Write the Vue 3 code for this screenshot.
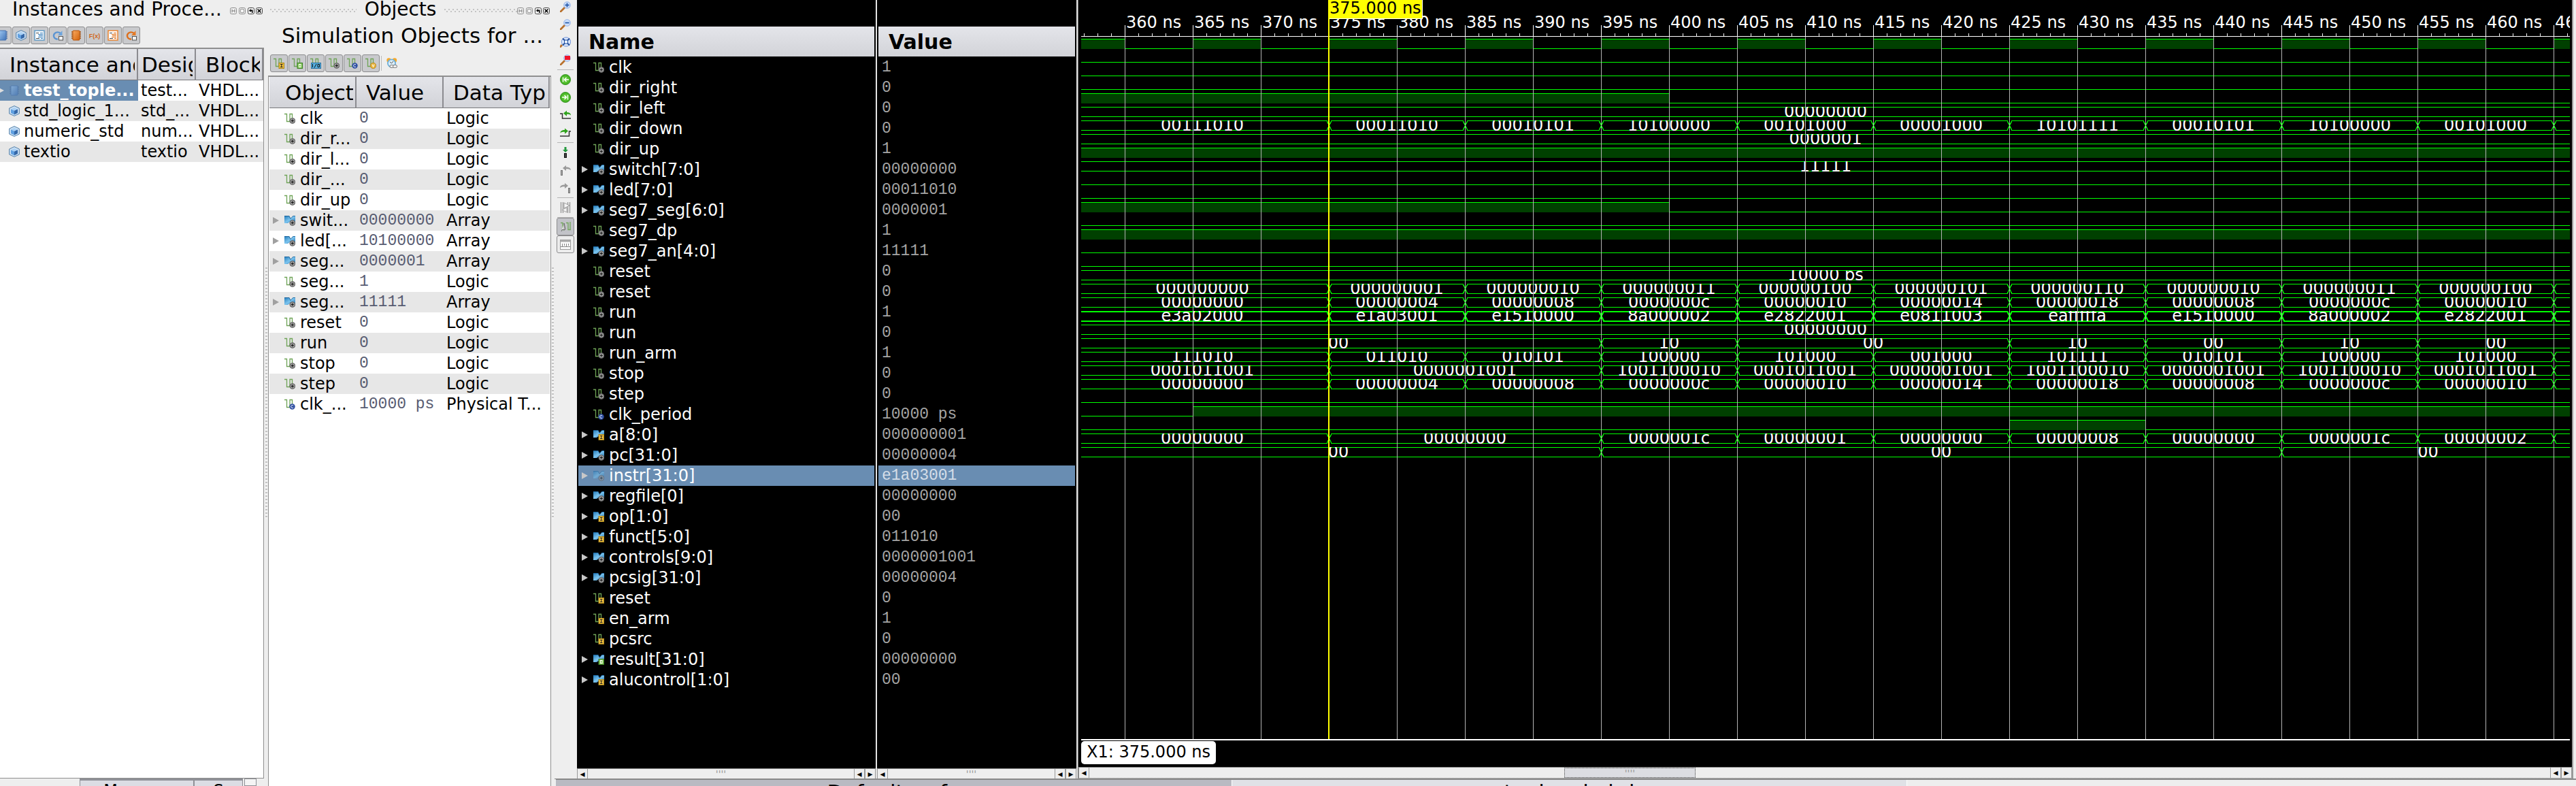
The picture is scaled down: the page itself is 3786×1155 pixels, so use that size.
<script setup>
const instances = [
  { name: 'test_tople...', unit: 'test...', block: 'VHDL...', icon: 'i-chip', selected: true },
  { name: 'std_logic_1...', unit: 'std_...', block: 'VHDL...', icon: 'i-cube' },
  { name: 'numeric_std', unit: 'num...', block: 'VHDL...', icon: 'i-cube' },
  { name: 'textio', unit: 'textio', block: 'VHDL...', icon: 'i-cube' },
]

const objects = [
  ['clk', '0', 'Logic'],
  ['dir_r...', '0', 'Logic'],
  ['dir_l...', '0', 'Logic'],
  ['dir_...', '0', 'Logic'],
  ['dir_up', '0', 'Logic'],
  ['swit...', '00000000', 'Array'],
  ['led[...', '10100000', 'Array'],
  ['seg...', '0000001', 'Array'],
  ['seg...', '1', 'Logic'],
  ['seg...', '11111', 'Array'],
  ['reset', '0', 'Logic'],
  ['run', '0', 'Logic'],
  ['stop', '0', 'Logic'],
  ['step', '0', 'Logic'],
  ['clk_...', '10000 ps', 'Physical T...'],
].map(([name, value, type]) => ({
  name, value, type,
  bus: type === 'Array',
  badge: type.startsWith('Physical') ? 'b-c' : 'b-plus',
}))

const instanceTools = ['i-chip', 'i-cube', 'i-list', 'i-proc', 'i-chip-o', 'i-fx', 'i-list-o', 'i-proc-o']
const objectTools = ['b-i', 'b-o', 'b-io', 'b-plus', 'b-c', 'b-v']
const waveTools = [
  ['t-zoomin', 't-zoomout', 't-zoomfit', 't-zoomsel'],
  ['t-first', 't-last', 't-prev', 't-next'],
  ['t-marker', 't-mprev', 't-mnext'],
  ['t-swap'],
]

// Segment lists for the buses that share the ten-nanosecond fetch rhythm
const T = [375, 385, 395, 405, 415, 425, 435, 445, 455]
const every = (s) => ({ edges: [...T, 465], labels: s.split(' ') })
const pcs = '00000000 00000004 00000008 0000000c 00000010 00000014 00000018 00000008 0000000c 00000010'

const signals = [
  { n: 'clk', v: '1', clock: true },
  { n: 'dir_right', v: '0', low: true },
  { n: 'dir_left', v: '0', low: true },
  { n: 'dir_down', v: '0', low: true },
  { n: 'dir_up', v: '1', high: [[null, 400]] },
  { n: 'switch[7:0]', v: '00000000', all: '00000000' },
  { n: 'led[7:0]', v: '00011010', seg: every('00111010 00011010 00010101 10100000 00101000 00001000 10101111 00010101 10100000 00101000') },
  { n: 'seg7_seg[6:0]', v: '0000001', all: '0000001' },
  { n: 'seg7_dp', v: '1', high: [[null, null]] },
  { n: 'seg7_an[4:0]', v: '11111', all: '11111' },
  { n: 'reset', v: '0', low: true },
  { n: 'reset', v: '0', low: true },
  { n: 'run', v: '1', high: [[null, 400]] },
  { n: 'run', v: '0', low: true },
  { n: 'run_arm', v: '1', high: [[null, null]] },
  { n: 'stop', v: '0', low: true },
  { n: 'step', v: '0', low: true },
  { n: 'clk_period', v: '10000 ps', all: '10000 ps', scalar: true, b: 'b-c' },
  { n: 'a[8:0]', v: '000000001', b: 'b-i', seg: every('000000000 000000001 000000010 000000011 000000100 000000101 000000110 000000010 000000011 000000100') },
  { n: 'pc[31:0]', v: '00000004', seg: every(pcs) },
  { n: 'instr[31:0]', v: 'e1a03001', selected: true, seg: every('e3a02000 e1a03001 e1510000 8a000002 e2822001 e0811003 eafffffa e1510000 8a000002 e2822001') },
  { n: 'regfile[0]', v: '00000000', all: '00000000' },
  { n: 'op[1:0]', v: '00', b: 'b-i', seg: { edges: [395, 405, 425, 435, 445, 455], labels: ['00', '10', '00', '10', '00', '10', '00'] } },
  { n: 'funct[5:0]', v: '011010', b: 'b-i', seg: every('111010 011010 010101 100000 101000 001000 101111 010101 100000 101000') },
  { n: 'controls[9:0]', v: '0000001001', seg: { edges: [375, 395, 405, 415, 425, 435, 445, 455, 465], labels: ['0001011001', '0000001001', '1001100010', '0001011001', '0000001001', '1001100010', '0000001001', '1001100010', '0001011001'] } },
  { n: 'pcsig[31:0]', v: '00000004', seg: every(pcs) },
  { n: 'reset', v: '0', b: 'b-i', low: true },
  { n: 'en_arm', v: '1', b: 'b-i', high: [[365, null]] },
  { n: 'pcsrc', v: '0', b: 'b-i', high: [[425, 435]] },
  { n: 'result[31:0]', v: '00000000', b: 'b-o', seg: { edges: [375, 395, 405, 415, 425, 435, 445, 455, 465], labels: ['00000000', '00000000', '0000001c', '00000001', '00000000', '00000008', '00000000', '0000001c', '00000002'] } },
  { n: 'alucontrol[1:0]', v: '00', b: 'b-i', seg: { edges: [395, 445], labels: ['00', '00', '00'] } },
]

// Time axis: twenty pixels per nanosecond, 360 ns at 64 px
const START = -8
const END = 2195
const px = (ns) => 64 + (ns - 360) * 20
const HI = 0.5
const LO = 14.5

function digital(s) {
  const high = s.clock
    ? Array.from({ length: 12 }, (_, i) => [355 + i * 10, 360 + i * 10])
    : (s.high || [])
  const spans = high.map(([a, b]) => [a === null ? START : px(a), b === null ? END : px(b)])
  let d = `M${START} ${spans.length && spans[0][0] <= START ? HI : LO}`
  for (const [a, b] of spans) {
    if (a > START) d += `H${a}`
    d += `V${HI}H${b}`
    if (b < END) d += `V${LO}`
  }
  d += `H${END}`
  return { spans, d }
}

function bus(s) {
  const edges = (s.seg ? s.seg.edges : []).map(px)
  let up = `M${START} ${HI}`
  let down = `M${START} ${LO}`
  let a = HI
  let b = LO
  for (const x of edges) {
    up += `H${x - 3}L${x + 4} ${b}`
    down += `H${x - 3}L${x + 4} ${a}`
    ;[a, b] = [b, a]
  }
  up += `H${END}`
  down += `H${END}`
  const stops = [START, ...edges, END]
  const texts = s.seg
    ? s.seg.labels.map((t, i) => ({ t, x: (stops[i] + stops[i + 1]) / 2 }))
    : [{ t: s.all, x: '50%' }]
  return { d: up + down, texts }
}

const waves = signals.map((s, i) => {
  const isBus = Boolean(s.all || s.seg)
  return { y: 57 + i * 20, isBus, thick: s.selected, ...(isBus ? bus(s) : digital(s)) }
})

const majors = Array.from({ length: 22 }, (_, i) => 360 + i * 5)
const minors = Array.from({ length: 110 }, (_, i) => 357 + i).filter((t) => t % 5)
const isBusSignal = (s) => Boolean((s.all || s.seg) && !s.scalar)
</script>

<template>
  <svg class="defs" aria-hidden="true">
    <defs>
      <linearGradient id="gBlue" x1="0" y1="0" x2="1" y2="1"><stop offset="0" stop-color="#9cc6f0" /><stop offset="1" stop-color="#3f72b8" /></linearGradient>
      <linearGradient id="gOrange" x1="0" y1="0" x2="1" y2="1"><stop offset="0" stop-color="#f7a860" /><stop offset="1" stop-color="#d5640c" /></linearGradient>
      <linearGradient id="gBus" x1="0" y1="0" x2="1" y2="1"><stop offset="0" stop-color="#1f78b8" /><stop offset=".5" stop-color="#7cc4ee" /><stop offset="1" stop-color="#1a6cab" /></linearGradient>
      <radialGradient id="gGreen"><stop offset="0" stop-color="#7be04a" /><stop offset="1" stop-color="#3cab1e" /></radialGradient>
    </defs>
    <symbol id="i-chip" viewBox="0 0 16 16"><path d="M1 3h2M1 6h2M1 9h2M1 12h2M13 3h2M13 6h2M13 9h2M13 12h2" stroke="#4a6fa5" stroke-width="1.4" /><rect x="3" y="1" width="10" height="14" rx="1" fill="url(#gBlue)" stroke="#4470ae" /></symbol>
    <symbol id="i-chip-o" viewBox="0 0 16 16"><path d="M1 3h2M1 6h2M1 9h2M1 12h2M13 3h2M13 6h2M13 9h2M13 12h2" stroke="#a04c08" stroke-width="1.4" /><rect x="3" y="1" width="10" height="14" rx="1" fill="url(#gOrange)" stroke="#b55208" /></symbol>
    <symbol id="i-cube" viewBox="0 0 16 16"><path d="M8 .6 15.3 4v8L8 15.4.7 12V4z" fill="#cfe2f4" stroke="#4f7ea8" /><path d="M3 5.200 8 7.500v6L3 11z" fill="#5f9fe0" /><path d="M13 5.200 8 7.500v6l5-2.500z" fill="#3568a8" /><path d="M3 5.200 8 3l5 2.200-5 2.300z" fill="#a9d0f5" /></symbol>
    <symbol id="i-list" viewBox="0 0 16 16"><rect x="1" y="1" width="14" height="14" fill="#fff" stroke="#6ba0c8" stroke-width="1.600" /><path d="M3 4.500h4M3 12.500h5" stroke="#444" /><path d="M6 6.500h7M7 8.500h6M6 10.500h7M9 4.500h4M10 12.500h3" stroke="#2b78b8" /></symbol>
    <symbol id="i-list-o" viewBox="0 0 16 16"><rect x="1" y="1" width="14" height="14" fill="#fff" stroke="#e88a3c" stroke-width="1.600" /><path d="M3 4.500h4M3 12.500h5" stroke="#444" /><path d="M6 6.500h7M7 8.500h6M6 10.500h7M9 4.500h4M10 12.500h3" stroke="#e0690c" /></symbol>
    <symbol id="i-proc" viewBox="0 0 16 16"><path d="M8 13.500C3 14 .5 9 3 5.500 5 3 9 2.500 12 5" fill="none" stroke="#5b94d2" stroke-width="2.400" /><path d="M14.500 1v7H8z" fill="#6ea5de" /><rect x="9.500" y="9.500" width="6" height="5.500" fill="#f2f2f2" stroke="#555" /></symbol>
    <symbol id="i-proc-o" viewBox="0 0 16 16"><path d="M8 13.500C3 14 .5 9 3 5.500 5 3 9 2.500 12 5" fill="none" stroke="#dd6f1c" stroke-width="2.400" /><path d="M14.500 1v7H8z" fill="#e57a26" /><rect x="9.500" y="9.500" width="6" height="5.500" fill="#f2f2f2" stroke="#555" /></symbol>
    <symbol id="i-fx" viewBox="0 0 16 16"><text x="8" y="12" text-anchor="middle" font-family="Liberation Sans, sans-serif" font-weight="700" font-size="9" fill="#d0691c">F(x)</text></symbol>
    <symbol id="s-wave" viewBox="0 0 16 16"><path d="M0 1.500h3.500v11H8v-11h3.500V8" fill="none" stroke="#6fa457" stroke-width="1.300" /></symbol>
    <symbol id="s-bus" viewBox="0 0 16 16"><path d="M0 1h7l2.500 4L13 1h3v11h-5L9 9l-4 3H0z" fill="url(#gBus)" /><path d="M0 1.500h7l2 4 3.500-4H16" stroke="#155a92" stroke-width=".8" fill="none" /></symbol>
    <symbol id="b-plus" viewBox="0 0 16 16"><circle cx="11.800" cy="11.500" r="3.900" fill="#999" stroke="#5c5c5c" /><path d="M9.800 11.500h4M11.800 9.500v4" stroke="#111" /></symbol>
    <symbol id="b-c" viewBox="0 0 16 16"><circle cx="11.500" cy="11.500" r="4.200" fill="#2f4fa3" /><path d="M13 10a2 2 0 1 0 0 3" fill="none" stroke="#fff" /></symbol>
    <symbol id="b-v" viewBox="0 0 16 16"><circle cx="11.500" cy="11.500" r="4.200" fill="#e6b23a" stroke="#ad7a12" stroke-width=".7" /><path d="M10 9.500l1.500 4 1.500-4" fill="none" stroke="#fff" /></symbol>
    <symbol id="b-i" viewBox="0 0 16 16"><rect x="8" y="7.500" width="7.500" height="8" fill="#f0c040" stroke="#a9841a" /><path d="M10 9.500h3.500M10 13.500h3.500M11.800 9.500v4" stroke="#222" /></symbol>
    <symbol id="b-o" viewBox="0 0 16 16"><rect x="8" y="7.500" width="7.500" height="8" fill="#7ec452" stroke="#3f7f28" /><rect x="10.500" y="9.500" width="2.500" height="4" fill="none" stroke="#fff" /></symbol>
    <symbol id="b-io" viewBox="0 0 16 16"><rect x="1.500" y="7.500" width="14" height="8" fill="#58b0e0" stroke="#2a6f9f" /><path d="M3.500 9v5M6 14.500 9 9M11 9.500h2.500v4H11z" fill="none" stroke="#111" /></symbol>
    <symbol id="t-lens" viewBox="0 0 16 16"><path d="M1 15 7 9" stroke="#b8702c" stroke-width="2.800" stroke-linecap="round" /><circle cx="10.500" cy="5.500" r="4.800" fill="#cfe0fa" stroke="#8fb0ea" /></symbol>
    <symbol id="t-zoomin" viewBox="0 0 16 16"><use href="#t-lens" /><path d="M7.500 5.500h6M10.500 2.500v6" stroke="#2c5fae" stroke-width="1.800" /></symbol>
    <symbol id="t-zoomout" viewBox="0 0 16 16"><use href="#t-lens" /><path d="M7.500 5.500h6" stroke="#2c5fae" stroke-width="1.800" /></symbol>
    <symbol id="t-zoomfit" viewBox="0 0 16 16"><path d="M0 15.500 3 12" stroke="#b8702c" stroke-width="2.800" /><circle cx="9" cy="7.500" r="6.600" fill="#dbe7fb" stroke="#6d90d8" /><path d="M4 2.500 14 12.500M14 2.500 4 12.500" stroke="#1e4c9c" stroke-width="1.800" /><rect x="6.500" y="5" width="5" height="5" fill="#e8f0ff" stroke="#1e4c9c" /></symbol>
    <symbol id="t-zoomsel" viewBox="0 0 16 16"><use href="#t-lens" /><rect x="7" y="2" width="8" height="6" fill="#f01428" /></symbol>
    <symbol id="t-first" viewBox="0 0 16 16"><circle cx="8" cy="8" r="7.600" fill="url(#gGreen)" stroke="#2b8a14" stroke-width=".8" /><path d="M4.500 4.500v7M13 8H6.500M9.500 5l-3 3 3 3" fill="none" stroke="#fff" stroke-width="1.400" /></symbol>
    <symbol id="t-last" viewBox="0 0 16 16"><circle cx="8" cy="8" r="7.600" fill="url(#gGreen)" stroke="#2b8a14" stroke-width=".8" /><path d="M11.500 4.500v7M3 8h6.500M6.500 5l3 3-3 3" fill="none" stroke="#fff" stroke-width="1.400" /></symbol>
    <symbol id="t-prev" viewBox="0 0 16 16"><path d="M0 6h3.500v7H16" fill="none" stroke="#333" stroke-width="1.500" /><path d="M5 5.500 10 1.500v2.500c4 0 6 1.500 6 4.500-1.500-1.500-3-1.700-6-1.700v3z" fill="#2fa31c" /></symbol>
    <symbol id="t-next" viewBox="0 0 16 16"><path d="M16 6h-2.500v7H0" fill="none" stroke="#333" stroke-width="1.500" /><path d="M12 5.500 7 1.500v2.500C3 4 .5 5.500.5 8.500 2 7 4 6.800 7 6.800v3z" fill="#2fa31c" /></symbol>
    <symbol id="t-marker" viewBox="0 0 16 16"><path d="M6.500 0h3v4H12L8 8 4 4h2.500z" fill="#249a3e" /><rect x="6.500" y="9.500" width="3" height="6" fill="#444" stroke="#111" /></symbol>
    <symbol id="t-mprev" viewBox="0 0 16 16"><rect x="1.500" y="8.500" width="2" height="7" fill="#aaa" stroke="#777" /><path d="M4 5 9 1v2.500c4 0 6.500 1 7 4.500-2-1.500-4-1.800-7-1.800V9z" fill="#9a9a9a" /></symbol>
    <symbol id="t-mnext" viewBox="0 0 16 16"><rect x="12.500" y="8.500" width="2" height="7" fill="#aaa" stroke="#777" /><path d="M12 5 7 1v2.500C3 3.500.5 4.500 0 8c2-1.500 4-1.800 7-1.800V9z" fill="#9a9a9a" /></symbol>
    <symbol id="t-swap" viewBox="0 0 16 16"><path d="M1.500 0v16M4.500 0v16M11.500 0v16M14.500 0v16" stroke="#9c9c9c" stroke-width="1.400" /><path d="M6 1l8 4-8 4zM10 8v7l-7-3.500z" fill="#f4f4f4" stroke="#8c8c8c" stroke-width=".8" /></symbol>
    <symbol id="t-snap" viewBox="0 0 16 16"><path d="M1 2.500h3v10h3M9 2.500h3v10h4M15 1v12" fill="none" stroke="#74a85e" stroke-width="1.400" /><path d="M6 3v10l-2.500-1L2 15M6 3l2 9-2 1" fill="#fff" stroke="#666" /></symbol>
    <symbol id="t-ruler" viewBox="0 0 16 16"><rect x=".5" y="1.500" width="15" height="14" fill="#fafafa" stroke="#999" /><path d="M.5 3h15" stroke="#aaa" stroke-width="3" /><path d="M3.500 7v4M6.500 7v3M9.500 7v4M12.500 7v3M1 11.500h14" stroke="#888" /></symbol>
    <symbol id="t-clock" viewBox="0 0 16 16"><circle cx="3.500" cy="3.500" r="3.200" fill="#f5a82a" /><circle cx="12" cy="3.500" r="3.200" fill="#f5a82a" /><circle cx="7.500" cy="8" r="5.600" fill="#dceefa" stroke="#6fb0d8" stroke-width="1.800" /><path d="M5 6l2.500 2L10 5" fill="none" stroke="#555" /><rect x="5" y="10.500" width="5.500" height="4" rx="2" fill="#eee" stroke="#777" /><rect x="9.500" y="10.500" width="6" height="4" rx="2" fill="#eee" stroke="#777" /></symbol>
    <symbol id="w-buttons" viewBox="0 0 48 10">
      <g fill="#f4f4f4" stroke="#8a8a8a"><rect x=".5" y=".5" width="9" height="9" rx="2" /><rect x="13.500" y=".5" width="9" height="9" rx="2" /><rect x="26.500" y=".5" width="9" height="9" rx="2" stroke="#444" /><rect x="38.500" y=".5" width="9" height="9" rx="2" stroke="#444" /></g>
      <path d="M3 2.500v5M7 2.500v5M3 5h4" stroke="#777" /><path d="M15.500 2.500h5v5h-5z" fill="none" stroke="#999" />
      <path d="M28 4.500l2.500-2.500v1.500H33.500V8h-1.500V5.500h-1.500V7z" fill="#000" /><path d="M40.500 2.500l5 5M45.500 2.500l-5 5" stroke="#000" stroke-width="1.600" />
    </symbol>
  </svg>

  <main class="app">
    <section class="dock dock-instances">
      <header class="dock-title"><h2 class="indent">Instances and Proce...</h2><svg class="winbtns"><use href="#w-buttons" /></svg></header>
      <div class="toolbar shifted">
        <button v-for="t in instanceTools" :key="t" type="button" class="tool" :aria-label="t"><svg class="ico"><use :href="'#' + t" /></svg></button>
      </div>
      <div class="frame frame-left">
        <table class="grid">
          <colgroup><col class="c-inst"><col class="c-unit"><col></colgroup>
          <thead><tr><th class="h16"><div class="head">Instance and</div></th><th class="h6"><div class="head">Design</div></th><th class="h16"><div class="head">Block</div></th></tr></thead>
          <tbody>
            <tr v-for="r in instances" :key="r.name" :class="{ selected: r.selected }">
              <td><div class="cell pad13"><i v-if="r.selected" class="tri edge"></i><svg class="ico" :class="{ faded: r.selected }"><use :href="'#' + r.icon" /></svg>{{ r.name }}</div></td>
              <td>{{ r.unit }}</td>
              <td>{{ r.block }}</td>
            </tr>
          </tbody>
        </table>
      </div>
      <div class="lower-tabs"><button type="button">Memory</button><button type="button">S</button><span class="nudge"></span></div>
    </section>

    <section class="dock dock-objects">
      <header class="dock-title"><span class="dots"></span><h2>Objects</h2><span class="dots"></span><svg class="winbtns"><use href="#w-buttons" /></svg></header>
      <h3>Simulation Objects for ...</h3>
      <div class="toolbar">
        <button v-for="t in objectTools" :key="t" type="button" class="tool" :aria-label="t"><svg class="ico"><use href="#s-wave" /><use :href="'#' + t" /></svg></button>
        <span class="vsep"></span>
        <svg class="ico"><use href="#t-clock" /></svg>
      </div>
      <div class="frame frame-objects">
        <table class="grid">
          <colgroup><col class="c-obj"><col class="c-obj"><col></colgroup>
          <thead><tr><th class="h24"><div class="head">Object Name</div></th><th class="h16"><div class="head">Value</div></th><th class="h16"><div class="head">Data Type</div></th></tr></thead>
          <tbody>
            <tr v-for="(o, i) in objects" :key="i">
              <td><div class="cell pad5"><i class="tri" :class="{ none: !o.bus }"></i><svg class="ico"><use :href="o.bus ? '#s-bus' : '#s-wave'" /><use :href="'#' + o.badge" /></svg>{{ o.name }}</div></td>
              <td class="mono">{{ o.value }}</td>
              <td>{{ o.type }}</td>
            </tr>
          </tbody>
        </table>
      </div>
    </section>

    <section class="work">
      <div class="work-main">
        <nav class="side">
          <div v-for="(g, i) in waveTools" :key="i" class="group">
            <button v-for="t in g" :key="t" type="button" class="flat" :aria-label="t"><svg class="ico"><use :href="'#' + t" /></svg></button>
          </div>
          <button type="button" class="tool pressed" aria-label="Snap"><svg class="ico"><use href="#t-snap" /></svg></button>
          <button type="button" class="tool" aria-label="Ruler"><svg class="ico"><use href="#t-ruler" /></svg></button>
        </nav>

        <div class="names">
          <table class="signals">
            <thead><tr><th>Name</th></tr></thead>
            <tbody>
              <tr v-for="(s, i) in signals" :key="i" :class="{ selected: s.selected }">
                <td><div class="cell pad5"><i class="tri" :class="{ none: !isBusSignal(s) }"></i><svg class="ico" :class="{ faded: s.selected }"><use :href="isBusSignal(s) ? '#s-bus' : '#s-wave'" /><use :href="'#' + (s.b || 'b-plus')" /></svg>{{ s.n }}</div></td>
              </tr>
            </tbody>
          </table>
          <div class="hscroll"><span>◂</span><b>''''</b><span>◂</span><span>▸</span></div>
        </div>
        <div class="divider"></div>
        <div class="values">
          <table class="signals">
            <thead><tr><th class="hv">Value</th></tr></thead>
            <tbody>
              <tr v-for="(s, i) in signals" :key="i" :class="{ selected: s.selected }"><td class="mono">{{ s.v }}</td></tr>
            </tbody>
          </table>
          <div class="hscroll"><span>◂</span><b>''''</b><span>◂</span><span>▸</span></div>
        </div>
        <div class="divider wide"></div>

        <div class="wave">
          <svg class="plot">
            <g shape-rendering="crispEdges">
              <g v-for="w in waves" :key="w.y" :transform="`translate(0 ${w.y})`">
                <template v-if="!w.isBus">
                  <rect v-for="(p, j) in w.spans" :key="j" :x="p[0]" y="0" :width="p[1] - p[0]" height="15" class="fill" />
                </template>
                <path :d="w.d" class="trace" :class="{ thick: w.thick }" />
              </g>
            </g>
            <svg v-for="w in waves.filter((r) => r.isBus)" :key="'t' + w.y" x="0" :y="w.y" width="100%" height="15" class="clip">
              <text v-for="(t, j) in w.texts" :key="j" :x="t.x" y="15" text-anchor="middle">{{ t.t }}</text>
            </svg>
            <g shape-rendering="crispEdges">
              <line v-for="t in majors" :key="t" :x1="px(t) + 0.5" :x2="px(t) + 0.5" y1="54" y2="100%" class="gridline" />
              <line v-for="t in majors" :key="'m' + t" :x1="px(t) + 0.5" :x2="px(t) + 0.5" y1="37" y2="53" class="tick" />
              <line v-for="t in minors" :key="'n' + t" :x1="px(t) + 0.5" :x2="px(t) + 0.5" y1="49" y2="53" class="tick" />
              <line x1="0" x2="100%" y1="53.500" y2="53.500" class="tick" />
            </g>
            <text v-for="t in majors" :key="'l' + t" :x="px(t) + 2" y="41">{{ t }} ns</text>
            <g shape-rendering="crispEdges">
              <rect x="364" y="0" width="138" height="28" fill="#fff" />
              <rect x="364" y="0" width="137" height="27" fill="#ff0" />
              <rect x="363" y="0" width="2" height="100%" fill="#ff0" />
            </g>
            <text x="365" y="20" class="cursor">375.000 ns</text>
          </svg>
          <div class="status"><output>X1: 375.000 ns</output></div>
          <div class="hscroll track"><span>◂</span><i class="gap"></i><b>''''</b><i class="rest"></i><span>◂</span><span>▸</span></div>
        </div>
        <div class="rim"></div>
      </div>
      <div class="doc-tabs"><button type="button" class="dark">Default.wcfg</button><button type="button">toplevel.vhd</button></div>
    </section>
  </main>
</template>

<style>
html, body { margin: 0; background: #eee; overflow: hidden; }
</style>

<style scoped>
.defs { position: absolute; width: 0; height: 0; }
.app { display: flex; height: 100vh; overflow: hidden; font: 24px/30px "DejaVu Sans", sans-serif; color: #000; background: #eee; }
h2, h3 { margin: 0; font-weight: 400; white-space: nowrap; }
button { font: inherit; padding: 0; margin: 0; box-sizing: border-box; }
.ico { width: 16px; height: 16px; flex: none; display: block; }
.faded { opacity: .55; }

.dock { display: flex; flex-direction: column; flex: none; min-height: 0; }
.dock-instances { width: 390px; }
.dock-objects { width: 425px; position: relative; }
.dock-objects::before, .dock-objects::after { content: ""; position: absolute; top: 34%; height: 32%; width: 3px; background: repeating-linear-gradient(#c4c4c4 0 2px, #f4f4f4 2px 5px); }
.dock-objects::before { left: 0; }
.dock-objects::after { right: 1px; }
.dock-title { display: flex; height: 32px; align-items: center; flex: none; padding-right: 4px; }
.dock-objects .dock-title { padding: 0 7px; }
.dock-title h2 { font-size: 28px; line-height: 32px; padding-bottom: 4px; }
.dock-title .indent { padding-left: 18px; flex: 1; }
.winbtns { width: 48px; height: 10px; flex: none; }
.dots { flex: 106; height: 6px; background: radial-gradient(circle at 1px 1px, #c4c4c4 1px, transparent 1px) 0 0 / 6px 6px, radial-gradient(circle at 1px 1px, #c4c4c4 1px, transparent 1px) 3px 3px / 6px 6px; }
.dock-title h2 + .dots { margin-left: 12px; }
.dock-title .dots:first-child { flex: 126; margin-right: 12px; }
h3 { font-size: 31px; line-height: 40px; padding: 0 0 0 24px; height: 48px; box-sizing: border-box; }
.toolbar { display: flex; gap: 1px; height: 26px; flex: none; align-items: center; padding-left: 7px; }
.toolbar.shifted { margin: 7px 0 0 -16px; }
.tool { width: 26px; height: 26px; border: 1px solid #8c8c8e; border-radius: 3px; background: #c9cacd; display: flex; align-items: center; justify-content: center; flex: none; }
.vsep { width: 1px; height: 22px; background: #bbb; margin: 0 6px 0 1px; }
.frame { flex: 1; min-height: 0; background: #fff; overflow: hidden; box-sizing: border-box; }
.frame-left { margin: 5px 2px 0 0; border: solid #8f8f8f; border-width: 2px 1px 1px 0; }
.frame-objects { margin: 5px 5px 0 4px; border: solid #8f8f8f; border-width: 2px 1px 0 1px; padding: 0 1px; }

table { border-collapse: collapse; table-layout: fixed; width: 100%; }
td, th { padding: 0; white-space: nowrap; overflow: hidden; text-align: left; font-weight: 400; }
.grid { border-collapse: separate; border-spacing: 0; }
.grid th { height: 46px; font-size: 31px; line-height: 44px; background: linear-gradient(#e4e5ea, #d2d3d8); border-bottom: 1px solid #77777a; border-right: 2px solid #8b8b90; background-clip: padding-box; box-sizing: border-box; }
.head { overflow: hidden; margin-right: 3px; }
.grid td { height: 30px; }
.grid td + td { padding-left: 4px; }
.grid tbody tr:nth-child(even) { background: #e7e7e7; }
.c-inst { width: 203px; }
.c-unit { width: 85px; }
.c-obj { width: 128px; }
.grid .h6 { padding-left: 5px; }
.grid .h16 { padding-left: 14px; }
.grid .h24 { padding-left: 23px; }
.grid .selected td:first-child { background: #698db2; color: #fff; font-weight: 700; }
.cell { display: flex; align-items: center; height: 30px; gap: 7px; overflow: hidden; }
.pad13 { padding-left: 13px; }
.pad5 { padding-left: 5px; gap: 8px; }
.tri { width: 0; height: 0; border: solid transparent; border-width: 5px 0 5px 9px; border-left-color: #a0a0a0; flex: none; }
.tri.none { visibility: hidden; }
.tri.edge { margin-left: -16px; border-left-color: #ddd; }
.cell .ico { margin-right: -1px; }
.mono { font-family: "Liberation Mono", monospace; font-size: 23px; color: #585c72; }

.lower-tabs { display: flex; flex: none; height: 11px; padding-left: 117px; overflow: hidden; }
.lower-tabs button { border: 1px solid #8f9096; border-width: 3px 1px 0; background: #dcdde4; font-size: 24px; line-height: 30px; flex: none; align-self: flex-start; }
.lower-tabs button:first-child { width: 168px; }
.lower-tabs button + button { width: 72px; }
.nudge { width: 16px; margin-left: 2px; border: 1px solid #8f9096; background: #f4f4f4; }

.work { flex: 1; min-width: 0; display: flex; flex-direction: column; }
.work-main { flex: 1; min-height: 0; display: flex; border-bottom: 1px solid #888; }
.side { width: 33px; flex: none; display: flex; flex-direction: column; align-items: center; box-sizing: border-box; padding-right: 1px; }
.group { width: 24px; border-bottom: 1px solid #b5b5b5; display: flex; flex-direction: column; align-items: center; gap: 10px; padding: 6px 0; box-sizing: border-box; }
.group:first-child { padding-top: 2px; }
.flat { border: 0; background: none; height: 16px; display: block; }
.side .tool { background: #ececec; }
.side .tool.pressed { background: #c2c3c8; }

.names, .values { background: #000; display: flex; flex-direction: column; justify-content: space-between; flex: none; }
.names { width: 439px; }
.values { width: 293px; }
.signals { margin: 39px 2px 0; width: auto; color: #fff; }
.signals th { height: 45px; color: #000; font-size: 30px; font-weight: 700; line-height: 44px; padding-left: 15px; background: linear-gradient(#e4e5ea, #d2d3d8) 0 0 / 100% 44px no-repeat; }
.signals td { height: 30px; }
.signals .tri { border-left-color: #c8c8c8; }
.signals .selected { background: #698db2; }
.signals .mono { color: #a4a4a4; padding-left: 5px; }
.signals .selected .mono { color: #d4dde8; }
.divider { width: 2px; background: #e4e4e4; flex: none; }
.divider.wide { width: 3px; box-sizing: border-box; border-right: 1px solid #777; }

.hscroll { height: 15px; display: flex; background: #eee; border-top: 1px solid #888; flex: none; font-size: 14px; line-height: 14px; box-sizing: border-box; color: #000; }
.hscroll span { width: 16px; box-sizing: border-box; border: 1px solid #999; border-width: 0 1px; text-align: center; overflow: hidden; }
.hscroll b { flex: 1; text-align: center; font-weight: 400; color: #999; overflow: hidden; }

.wave { flex: 1; min-width: 0; background: #000; display: flex; flex-direction: column; }
.plot { display: block; flex: 1; min-height: 0; margin: 0 3px 0 4px; border-bottom: 2px solid #fff; overflow: hidden; }
.plot text { font: 24px "DejaVu Sans", sans-serif; fill: #fff; }
.plot .cursor { fill: #000; }
.clip { overflow: hidden; }
.fill { fill: #004000; }
.trace { fill: none; stroke: #0f0; stroke-width: 1; }
.trace.thick { stroke-width: 2; }
.gridline { stroke: #b4b4b4; }
.tick { stroke: #fff; }
.status { height: 39px; flex: none; }
.status output { display: inline-block; margin: 1px 0 0 4px; padding: 0 8px; height: 34px; line-height: 33px; background: #fff; border-radius: 5px; }
.track { height: 17px; background: repeating-conic-gradient(#e2e2e2 0 25%, #fafafa 0 50%) 0 0 / 2px 2px; border-bottom: 1px solid #aaa; }
.track span { background: #eee; }
.track .gap { flex: 699; }
.track .rest { flex: 1258; }
.track b { flex: 191; background: #dcdde2; border: 1px dotted #444; }
.rim { width: 6px; flex: none; box-sizing: border-box; border-left: 2px solid #999; background: #eee; }

.doc-tabs { height: 9px; flex: none; display: flex; overflow: hidden; margin-left: 2px; border-top: 1px solid #888; }
.doc-tabs button { width: 992px; flex: none; align-self: flex-start; border: 0; border-right: 1px solid #fff; background: #e0e1e6; font-size: 31px; line-height: 36px; }
.doc-tabs .dark { background: #b9bac2; width: 994px; }
</style>
